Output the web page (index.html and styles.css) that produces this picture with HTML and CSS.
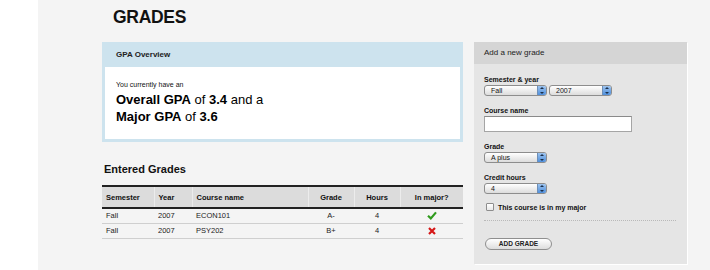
FILE: index.html
```html
<!DOCTYPE html>
<html lang="en">

<head>
  <meta charset="UTF-8">
  <title>Grades</title>
  <link rel="stylesheet" href="styles.css">
</head>

<body>
  <div class="page">
    <h1 class="title">GRADES</h1>

    <div class="layout">
      <div class="main">
        <section class="gpa">
          <div class="gpa-head">GPA Overview</div>
          <div class="gpa-body">
            <p class="gpa-intro">You currently have an</p>
            <p class="gpa-stats"><b>Overall GPA</b> of <b>3.4</b> and a<br><b>Major GPA</b> of <b>3.6</b></p>
          </div>
        </section>

        <h2 class="section-title">Entered Grades</h2>

        <table class="grades">
          <colgroup>
            <col style="width: 52px">
            <col style="width: 38px">
            <col style="width: 116px">
            <col style="width: 46px">
            <col style="width: 46px">
            <col>
          </colgroup>
          <thead>
            <tr>
              <th>Semester</th>
              <th>Year</th>
              <th>Course name</th>
              <th class="center">Grade</th>
              <th class="center">Hours</th>
              <th class="center">In major?</th>
            </tr>
          </thead>
          <tbody>
            <tr>
              <td>Fall</td>
              <td>2007</td>
              <td>ECON101</td>
              <td class="center">A-</td>
              <td class="center">4</td>
              <td class="center">
                <svg class="icon" width="10" height="9" viewBox="0 0 10 9"><path d="M1 4.8 L3.8 7.4 L9 1.4" fill="none" stroke="#2f9a1c" stroke-width="2.2"/></svg>
              </td>
            </tr>
            <tr>
              <td>Fall</td>
              <td>2007</td>
              <td>PSY202</td>
              <td class="center">B+</td>
              <td class="center">4</td>
              <td class="center">
                <svg class="icon" width="8" height="8" viewBox="0 0 8 8"><path d="M1 1 L7 7 M7 1 L1 7" fill="none" stroke="#d61717" stroke-width="2.2"/></svg>
              </td>
            </tr>
          </tbody>
        </table>
      </div>

      <aside class="sidebar">
        <div class="sidebar-head">Add a new grade</div>
        <form class="sidebar-body">
          <div class="field">
            <label>Semester &amp; year</label>
            <div class="row">
              <div class="select"><span>Fall</span><i class="arrows"></i></div>
              <div class="select"><span>2007</span><i class="arrows"></i></div>
            </div>
          </div>

          <div class="field">
            <label>Course name</label>
            <div class="text-input"></div>
          </div>

          <div class="field">
            <label>Grade</label>
            <div class="select"><span>A plus</span><i class="arrows"></i></div>
          </div>

          <div class="field">
            <label>Credit hours</label>
            <div class="select"><span>4</span><i class="arrows"></i></div>
          </div>

          <div class="check-row">
            <span class="checkbox"></span>
            <span>This course is in my major</span>
          </div>

          <div class="actions">
            <span class="button">ADD GRADE</span>
          </div>
        </form>
      </aside>
    </div>
  </div>
</body>

</html>
```

FILE: styles.css
```css
* {
  box-sizing: border-box;
}

body {
  margin: 0;
  background: #ffffff;
  font-family: "Liberation Sans", Arial, sans-serif;
  color: #111;
}

.page {
  margin-left: 38px;
  min-height: 270px;
  background: #f4f4f4;
  padding-left: 64px;
  padding-top: 6px;
}

.title {
  margin: 0 0 14px 11px;
  font-size: 17.5px;
  line-height: 22px;
  font-weight: bold;
  letter-spacing: -0.3px;
  color: #111;
}

.layout {
  display: flex;
  gap: 11px;
  align-items: flex-start;
}

.main {
  width: 361px;
}

/* gpa box */
.gpa {
  background: #cde3ee;
  padding: 0 3px 3px;
}

.gpa-head {
  height: 25px;
  line-height: 25px;
  padding-left: 11px;
  font-size: 8px;
  font-weight: bold;
  color: #222;
}

.gpa-body {
  background: #fff;
  padding: 13px 11px 14px;
}

.gpa-intro {
  margin: 0;
  font-size: 7px;
  line-height: 9px;
}

.gpa-stats {
  margin: 2px 0 0;
  font-size: 13px;
  line-height: 17px;
  color: #000;
}

.section-title {
  margin: 21px 0 9px 2px;
  font-size: 11px;
  line-height: 13px;
  font-weight: bold;
}

/* table */
.grades {
  width: 361px;
  table-layout: fixed;
  border-collapse: collapse;
  font-size: 7.5px;
  border-top: 2px solid #222;
}

.grades th {
  height: 22px;
  background: #dcdcdc;
  text-align: left;
  font-weight: bold;
  padding: 0 4px;
  border-right: 1px solid #ececec;
  border-bottom: 2px solid #222;
}

.grades th:last-child {
  border-right: none;
}

.grades td {
  height: 15px;
  padding: 0 4px;
  border-bottom: 1px solid #cfcfcf;
  color: #222;
}

.grades .center {
  text-align: center;
}

.icon {
  display: block;
  margin: 0 auto;
}

/* sidebar */
.sidebar {
  width: 213px;
  background: #e5e5e5;
  box-shadow: 1px 1px 0 #fff;
}

.sidebar-head {
  height: 22px;
  line-height: 22px;
  background: #d5d5d5;
  padding-left: 10px;
  font-size: 8px;
  color: #222;
}

.sidebar-body {
  margin: 0;
  padding: 11px 11px 14px 10px;
}

.field {
  margin-bottom: 10px;
}

.field label {
  display: block;
  font-size: 7px;
  line-height: 9px;
  font-weight: bold;
  margin-bottom: 1px;
}

.row {
  display: flex;
  gap: 2px;
}

.select {
  width: 63px;
  height: 11px;
  display: flex;
  align-items: center;
  justify-content: space-between;
  border: 1px solid #8d8d8d;
  border-radius: 3px;
  background: linear-gradient(#ffffff, #dcdcdc);
  font-size: 7px;
  padding-left: 6px;
  overflow: hidden;
}

.arrows {
  position: relative;
  width: 9px;
  height: 100%;
  background: linear-gradient(#9dc4ef, #4f8fdc);
  border-left: 1px solid #6d8fb8;
}

.arrows::before,
.arrows::after {
  content: "";
  position: absolute;
  left: 2px;
  border-left: 2px solid transparent;
  border-right: 2px solid transparent;
}

.arrows::before {
  top: 1px;
  border-bottom: 2px solid #1b2f4a;
}

.arrows::after {
  bottom: 1px;
  border-top: 2px solid #1b2f4a;
}

.text-input {
  width: 148px;
  height: 16px;
  background: #fff;
  border: 1px solid #a5a5a5;
  border-top-color: #8a8a8a;
}

.check-row {
  display: flex;
  align-items: center;
  gap: 4px;
  height: 10px;
  margin-top: -2px;
  padding-left: 2px;
  font-size: 7px;
  font-weight: bold;
}

.checkbox {
  width: 8px;
  height: 8px;
  border: 1px solid #8d8d8d;
  border-radius: 1px;
  background: linear-gradient(#ffffff, #e8e8e8);
}

.actions {
  margin-top: 8px;
  border-top: 1px dotted #b9b9b9;
  padding-top: 11px;
}

.button {
  display: inline-block;
  width: 67px;
  height: 12px;
  line-height: 10px;
  margin-left: 1px;
  text-align: center;
  border: 1px solid #8f8f8f;
  border-radius: 6px;
  background: linear-gradient(#ffffff, #dddddd);
  font-size: 6.5px;
  font-weight: bold;
  color: #222;
}
```
